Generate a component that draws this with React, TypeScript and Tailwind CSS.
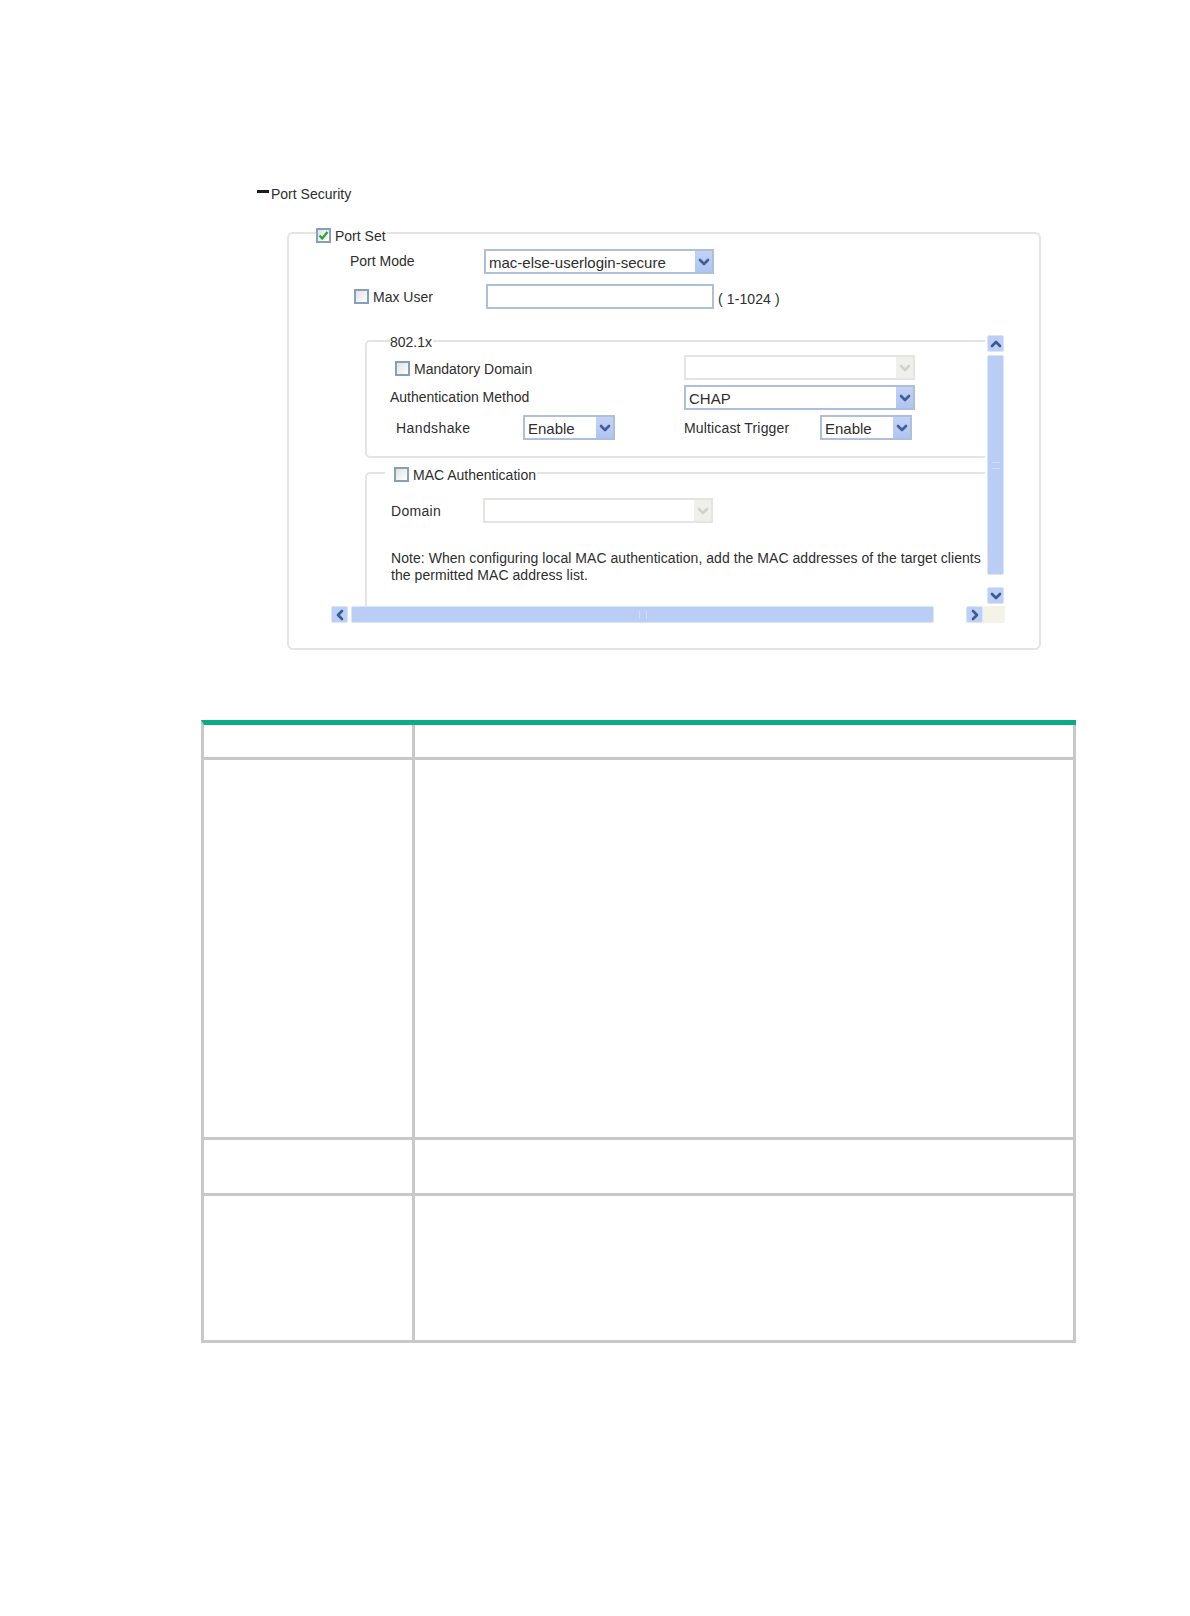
import React from "react";

function Chevron({ dir = "down", color = "#3f5f96" }: { dir?: "down" | "up" | "left" | "right"; color?: string }) {
  const pts = {
    down: "2,4 6,8 10,4",
    up: "2,8 6,4 10,8",
    left: "8,2 4,6 8,10",
    right: "4,2 8,6 4,10",
  }[dir];
  return (
    <svg width="12" height="12" viewBox="0 0 12 12" fill="none">
      <polyline points={pts} stroke={color} strokeWidth="2.6" strokeLinecap="round" strokeLinejoin="round" />
    </svg>
  );
}

function Select({ w, value, disabled }: { w: string; value?: string; disabled?: boolean }) {
  return (
    <div
      className={`flex h-[25px] items-stretch border-2 bg-white ${w} ${
        disabled ? "border-[#e4e4e0]" : "border-[#aebfd9]"
      }`}
    >
      <span className="flex-1 truncate pl-[3px] text-[15px] leading-[23px] text-[#2e2e2e]">{value}</span>
      <span
        className={`flex w-[17px] items-center justify-center ${
          disabled ? "bg-[#efefeb]" : "bg-gradient-to-b from-[#c3d3f6] to-[#aec4f2]"
        }`}
      >
        <Chevron color={disabled ? "#d0d0cc" : "#3f5f96"} />
      </span>
    </div>
  );
}

function Check({ checked }: { checked?: boolean }) {
  return (
    <span className="mr-[4px] flex h-[15px] w-[15px] shrink-0 items-center justify-center border-2 border-[#86a0bb] bg-gradient-to-br from-[#e2e2de] to-white">
      {checked && (
        <svg width="11" height="11" viewBox="0 0 11 11" fill="none">
          <polyline points="1.5,5.5 4.2,8.5 9.5,2" stroke="#2aa63c" strokeWidth="2.4" />
        </svg>
      )}
    </span>
  );
}

function ScrollButton({ dir }: { dir: "down" | "up" | "left" | "right" }) {
  return (
    <span className="flex h-[17px] w-[17px] shrink-0 items-center justify-center rounded-[2px] border border-[#dbe5f8] bg-[#bccff6]">
      <Chevron dir={dir} color="#3c5a90" />
    </span>
  );
}

export default function App() {
  return (
    <div className="h-[1616px] w-[1190px] overflow-hidden bg-white pt-[185px] font-['Liberation_Sans',Arial,sans-serif] text-[14px] text-[#2e2e2e]">
      {/* Section heading */}
      <div className="ml-[257px] flex h-[18px] items-center leading-[18px]">
        <span className="mr-[2px] mb-[6px] h-[3px] w-[12px] bg-[#1c1c1c]" />
        <span>Port Security</span>
      </div>

      {/* Port Set */}
      <fieldset className="mt-[19px] ml-[287px] h-[428px] w-[754px] rounded-[6px] border-2 border-[#e4e4e0]">
        <legend className="ml-[27px] flex h-[22px] items-center pt-[4px] pr-[1px]">
          <Check checked />
          <span className="pt-[2px]">Port Set</span>
        </legend>

        <div className="mt-[5px] flex h-[25px] items-center">
          <span className="w-[195px] pl-[61px]">Port Mode</span>
          <Select w="w-[230px]" value="mac-else-userlogin-secure" />
        </div>

        <div className="mt-[10px] flex h-[25px] items-center">
          <span className="flex w-[197px] items-center pl-[65px]">
            <Check />
            <span className="pt-[2px]">Max User</span>
          </span>
          <div className="h-[25px] w-[228px] border-2 border-[#aebfd9] bg-white" />
          <span className="mt-[6px] ml-[4px] tracking-[0.1px]">( 1-1024 )</span>
        </div>

        {/* Scroll pane */}
        <div className="mt-[26px] ml-[42px] w-[674px]">
          <div className="flex h-[271px]">
            <div className="w-[654px] overflow-hidden">
              <fieldset className="-mt-[1px] ml-[34px] h-[124px] w-[720px] rounded-[5px] border-2 border-[#e4e4e0]">
                <legend className="ml-[23px] h-[14px] pr-[1px] leading-[16px]">802.1x</legend>
                <div className="mt-[7px] flex h-[25px] items-center">
                  <div className="flex w-[317px] items-center pt-[2px] pl-[28px]">
                    <Check />
                    <span className="pt-[2px]">Mandatory Domain</span>
                  </div>
                  <Select w="w-[231px]" disabled />
                </div>
                <div className="mt-[5px] flex h-[25px] items-center">
                  <div className="w-[317px] pl-[23px]">Authentication Method</div>
                  <Select w="w-[231px]" value="CHAP" />
                </div>
                <div className="mt-[5px] flex h-[25px] items-center">
                  <div className="w-[156px] pt-[2px] pl-[29px] tracking-[0.4px]">Handshake</div>
                  <Select w="w-[92px]" value="Enable" />
                  <div className="ml-[69px] w-[136px] pt-[2px] tracking-[0.15px]">Multicast Trigger</div>
                  <Select w="w-[92px]" value="Enable" />
                </div>
              </fieldset>

              <fieldset className="mt-[6px] ml-[34px] h-[200px] w-[720px] rounded-[5px] border-2 border-[#e4e4e0]">
                <legend className="ml-[18px] flex h-[18px] items-center pt-[2px] pr-[1px] pl-[9px]">
                  <Check />
                  <span className="pt-[2px]">MAC Authentication</span>
                </legend>
                <div className="mt-[16px] flex h-[25px] items-center">
                  <div className="w-[116px] pt-[2px] pl-[24px] tracking-[0.3px]">Domain</div>
                  <Select w="w-[230px]" disabled />
                </div>
                <p className="mt-[27px] ml-[24px] leading-[17px] tracking-[0.05px] whitespace-nowrap">
                  Note: When configuring local MAC authentication, add the MAC addresses of the target clients
                  <br />
                  the permitted MAC address list.
                </p>
              </fieldset>
            </div>

            <div className="ml-[2px] flex w-[17px] flex-col">
              <ScrollButton dir="up" />
              <div className="mt-[3px] flex h-[220px] items-center justify-center rounded-[2px] border border-[#dbe5f8] bg-[#b9cdf5]">
                <span className="h-[7px] w-[8px] border-y border-[#d3dff8]" />
              </div>
              <div className="mt-[12px]">
                <ScrollButton dir="down" />
              </div>
            </div>
          </div>

          <div className="flex h-[17px]">
            <ScrollButton dir="left" />
            <div className="ml-[3px] flex h-[17px] w-[584px] items-center justify-center rounded-[2px] border border-[#dbe5f8] bg-[#b9cdf5]">
              <span className="h-[8px] w-[8px] border-x border-[#d3dff8]" />
            </div>
            <div className="ml-[32px]">
              <ScrollButton dir="right" />
            </div>
            <div className="h-[17px] w-[22px] bg-[#f5f3e8]" />
          </div>
        </div>
      </fieldset>

      {/* Table */}
      <div className="mt-[70px] ml-[201px] w-[875px] border-t-[5px] border-l-[3px] border-t-[#0bab86] border-l-[#c8c8c8]">
        <div className="grid grid-cols-[211px_661px] grid-rows-[35px_380px_56px_147px]">
          {Array.from({ length: 8 }).map((_, i) => (
            <div key={i} className="border-r-[3px] border-b-[3px] border-[#c8c8c8]" />
          ))}
        </div>
      </div>
    </div>
  );
}
